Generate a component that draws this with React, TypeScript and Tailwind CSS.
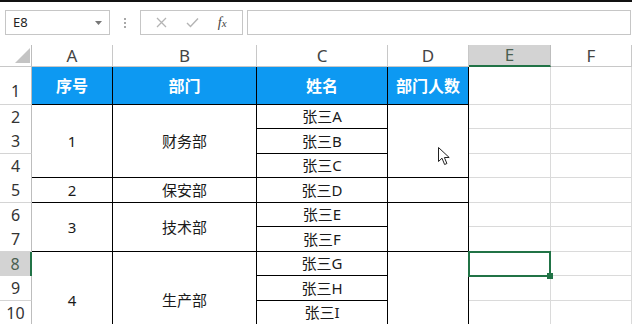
import React from "react";

const FONT = { fontFamily: '"Noto Sans", "Noto Sans CJK SC", sans-serif' };

function ColHead({ label, sel }: { label: string; sel?: boolean }) {
  return (
    <div
      className={
        sel
          ? "flex items-center justify-center bg-[#d3d3d3] border-r border-r-[#bdbdbd] border-b-2 border-b-[#217346] text-[17px] text-[#4a5f50]"
          : "flex items-center justify-center bg-white border-r border-r-[#c8c8c8] border-b border-b-[#c8c8c8] text-[17px] text-[#444]"
      }
    >
      {label}
    </div>
  );
}

function RowHead({ n, sel, tall }: { n?: number; sel?: boolean; tall?: boolean }) {
  return (
    <div
      className={
        (tall ? "items-end pb-[1px] " : "items-center ") +
        (sel
          ? "col-start-1 flex justify-center bg-[#d3d3d3] border-r-2 border-r-[#217346] border-b border-b-[#c8c8c8] text-[16px] text-[#4a5f50]"
          : "col-start-1 flex justify-center bg-white border-r border-r-[#bdbdbd] border-b border-b-[#d4d4d4] text-[16px] text-[#333]")
      }
    >
      {n}
    </div>
  );
}

function Blank() {
  return <div className="border-r border-b border-[#dadada] bg-white" />;
}

const cellTxt = "flex items-center justify-center border-r border-b border-black text-[15px] text-[#1a1a1a]";

export default function App() {
  return (
    <div className="relative w-[632px] h-[324px] overflow-hidden bg-white" style={FONT}>
      {/* toolbar */}
      <div className="h-[45px] border-t-2 border-t-[#111] flex items-start pt-[8px]">
        <div className="ml-[5px] w-[105px] h-[25px] border border-[#c6c6c6] flex items-center justify-between pl-[7px] pr-[7px]">
          <span className="text-[13px] text-[#222]">E8</span>
          <svg width="7" height="4" viewBox="0 0 7 4">
            <path d="M0 0 L7 0 L3.5 4 Z" fill="#777" />
          </svg>
        </div>
        <div className="w-[30px] h-[25px] flex flex-col items-center justify-center gap-[2px]">
          <div className="w-[2px] h-[2px] bg-[#a8a8a8]" />
          <div className="w-[2px] h-[2px] bg-[#a8a8a8]" />
          <div className="w-[2px] h-[2px] bg-[#a8a8a8]" />
        </div>
        <div className="w-[103px] h-[25px] border border-[#c6c6c6] flex items-center justify-around px-[6px]">
          <svg width="11" height="11" viewBox="0 0 11 11">
            <path d="M1 1 L10 10 M10 1 L1 10" stroke="#b4b4b4" strokeWidth="1.3" />
          </svg>
          <svg width="13" height="11" viewBox="0 0 13 11">
            <path d="M1 6 L4.5 9.5 L12 1.5" stroke="#b4b4b4" strokeWidth="1.4" fill="none" />
          </svg>
          <span className="text-[14px] italic text-[#444]" style={{ fontFamily: '"Liberation Serif", serif' }}>
            f<span className="text-[11px]">x</span>
          </span>
        </div>
        <div className="ml-[4px] flex-1 h-[25px] border border-[#c6c6c6] mr-[1px]" />
      </div>

      {/* grid */}
      <div className="grid grid-cols-[32px_81px_144px_131px_81px_82px_81px] grid-rows-[22px_38px_24px_25px_24px_25px_24px_25px_24px_25px_24px_25px]">
        {/* corner */}
        <div className="relative bg-white border-r border-r-[#bdbdbd] border-b border-b-[#c8c8c8]">
          <svg className="absolute left-[15px] top-[3px]" width="15" height="15" viewBox="0 0 15 15">
            <path d="M15 0 L15 15 L0 15 Z" fill="#c4c4c4" />
          </svg>
        </div>
        <ColHead label="A" />
        <ColHead label="B" />
        <ColHead label="C" />
        <ColHead label="D" />
        <ColHead label="E" sel />
        <ColHead label="F" />

        {/* row 1 */}
        <RowHead n={1} tall />
        {["序号", "部门", "姓名", "部门人数"].map((t) => (
          <div
            key={t}
            className="flex items-center justify-center bg-[#0d99f2] border-r border-b border-black text-white font-bold text-[16px]"
          >
            {t}
          </div>
        ))}
        <Blank />
        <Blank />

        {/* row headers */}
        <div className="row-start-3 col-start-1 grid">
          <RowHead n={2} />
        </div>
        <div className="row-start-4 col-start-1 grid">
          <RowHead n={3} />
        </div>
        <div className="row-start-5 col-start-1 grid">
          <RowHead n={4} />
        </div>
        <div className="row-start-6 col-start-1 grid">
          <RowHead n={5} />
        </div>
        <div className="row-start-7 col-start-1 grid">
          <RowHead n={6} />
        </div>
        <div className="row-start-8 col-start-1 grid">
          <RowHead n={7} />
        </div>
        <div className="row-start-9 col-start-1 grid">
          <RowHead n={8} sel />
        </div>
        <div className="row-start-10 col-start-1 grid">
          <RowHead n={9} />
        </div>
        <div className="row-start-11 col-start-1 grid">
          <RowHead n={10} />
        </div>
        <div className="row-start-12 col-start-1 grid">
          <RowHead />
        </div>

        {/* A column */}
        <div className={"col-start-2 row-start-3 row-span-3 " + cellTxt}>1</div>
        <div className={"col-start-2 row-start-6 " + cellTxt}>2</div>
        <div className={"col-start-2 row-start-7 row-span-2 " + cellTxt}>3</div>
        <div className={"col-start-2 row-start-9 row-span-4 " + cellTxt}>4</div>

        {/* B column */}
        <div className={"col-start-3 row-start-3 row-span-3 " + cellTxt}>财务部</div>
        <div className={"col-start-3 row-start-6 " + cellTxt}>保安部</div>
        <div className={"col-start-3 row-start-7 row-span-2 " + cellTxt}>技术部</div>
        <div className={"col-start-3 row-start-9 row-span-4 " + cellTxt}>生产部</div>

        {/* C column */}
        <div className={"col-start-4 row-start-3 " + cellTxt}>张三A</div>
        <div className={"col-start-4 row-start-4 " + cellTxt}>张三B</div>
        <div className={"col-start-4 row-start-5 " + cellTxt}>张三C</div>
        <div className={"col-start-4 row-start-6 " + cellTxt}>张三D</div>
        <div className={"col-start-4 row-start-7 " + cellTxt}>张三E</div>
        <div className={"col-start-4 row-start-8 " + cellTxt}>张三F</div>
        <div className={"col-start-4 row-start-9 " + cellTxt}>张三G</div>
        <div className={"col-start-4 row-start-10 " + cellTxt}>张三H</div>
        <div className={"col-start-4 row-start-11 " + cellTxt}>张三I</div>
        <div className="col-start-4 row-start-12 border-r border-b border-black" />

        {/* D column */}
        <div className="col-start-5 row-start-3 row-span-3 border-r border-b border-black" />
        <div className="col-start-5 row-start-6 border-r border-b border-black" />
        <div className="col-start-5 row-start-7 row-span-2 border-r border-b border-black" />
        <div className="col-start-5 row-start-9 row-span-4 border-r border-b border-black" />

        {/* E, F columns */}
        {[3, 4, 5, 6, 7, 8, 9, 10, 11, 12].map((r) => (
          <React.Fragment key={r}>
            <div
              className="col-start-6 relative border-r border-b border-[#dadada] bg-white"
              style={{ gridRowStart: r }}
            >
              {r === 9 && (
                <div className="absolute z-10 left-[-1px] top-[-1px] w-[83px] h-[26px] border-2 border-[#217346]">
                  <div className="absolute right-[-4px] bottom-[-4px] w-[6px] h-[6px] bg-[#217346]" />
                </div>
              )}
            </div>
            <div
              className="col-start-7 border-r border-b border-[#dadada] bg-white"
              style={{ gridRowStart: r }}
            />
          </React.Fragment>
        ))}
      </div>

      {/* mouse cursor */}
      <svg className="absolute z-20 left-[438px] top-[147px]" width="13" height="19" viewBox="0 0 13 19">
        <path
          d="M0.5 0.5 L0.5 14.5 L4 11.2 L6.6 17.5 L8.9 16.5 L6.4 10.5 L11.2 10.5 Z"
          fill="#fff"
          stroke="#222"
          strokeWidth="1"
          strokeLinejoin="round"
        />
      </svg>
    </div>
  );
}
